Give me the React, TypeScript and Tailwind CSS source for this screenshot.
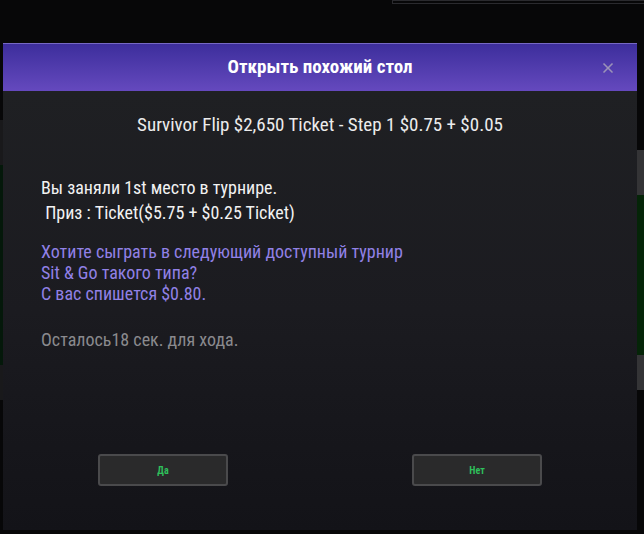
import { X } from "lucide-react";

const font = { fontFamily: '"Roboto Condensed", "Liberation Sans Narrow", Roboto, sans-serif' };

function DialogButton({ label }: { label: string }) {
  return (
    <button
      type="button"
      className="w-[130px] h-[32px] rounded-[3px] border-2 border-[#4a4a4c] bg-[#2a2a2b] text-[10px] font-bold text-[#2fbf5b]"
    >
      {label}
    </button>
  );
}

export default function App() {
  return (
    <div className="relative w-[644px] h-[534px] bg-[#070708] overflow-hidden" style={font}>
      {/* table behind the dialog */}
      <div className="absolute left-[392px] top-0 w-[260px] h-[4px] border border-[#2a2a2e]" />
      <div className="absolute left-0 top-[120px] w-[4px] h-[280px] bg-[#19191b]" />
      <div className="absolute left-0 top-[165px] w-[4px] h-[200px] bg-[#04180a]" />
      <div className="absolute right-0 top-[150px] w-[7px] h-[240px] bg-[#343436]" />
      <div className="absolute right-0 top-[195px] w-[7px] h-[160px] bg-[#052508]" />

      <div className="absolute left-[3px] top-[43px] w-[634px] h-[487px] flex flex-col bg-[#1e1f22]">
        <div className="relative h-[48px] flex items-center justify-center bg-gradient-to-b from-[#3d2e9c] to-[#6549be] border-t border-[#7668c4]">
          <span className="text-[19px] font-bold text-white">Открыть похожий стол</span>
          <X className="absolute right-[21px] top-[16px] text-[#9b93b8]" size={16} strokeWidth={2.5} />
        </div>
        <div className="flex-1 flex flex-col bg-gradient-to-b from-[#1f2023] via-[#1b1b20] to-[#131318]">
          <div className="pt-[22px] text-center text-[19px] leading-[24px] text-[#ececec]">
            Survivor Flip $2,650 Ticket - Step 1 $0.75 + $0.05
          </div>
          <div className="pl-[38px] pt-[38px] text-[18px] leading-[25px] text-[#f2f2f2]">
            <div>Вы заняли 1st место в турнире.</div>
            <div>&nbsp;Приз : Ticket($5.75 + $0.25 Ticket)</div>
          </div>
          <div className="pl-[38px] pt-[16px] text-[18px] leading-[21px] text-[#9181e6]">
            <div>Хотите сыграть в следующий доступный турнир</div>
            <div>Sit &amp; Go такого типа?</div>
            <div>С вас спишется $0.80.</div>
          </div>
          <div className="pl-[38px] pt-[25px] text-[18px] leading-[21px] text-[#8a8a8e]">Осталось18 сек. для хода.</div>
          <div className="mt-auto mb-[44px] flex justify-between pl-[95px] pr-[95px]">
            <DialogButton label="Да" />
            <DialogButton label="Нет" />
          </div>
        </div>
      </div>
    </div>
  );
}
